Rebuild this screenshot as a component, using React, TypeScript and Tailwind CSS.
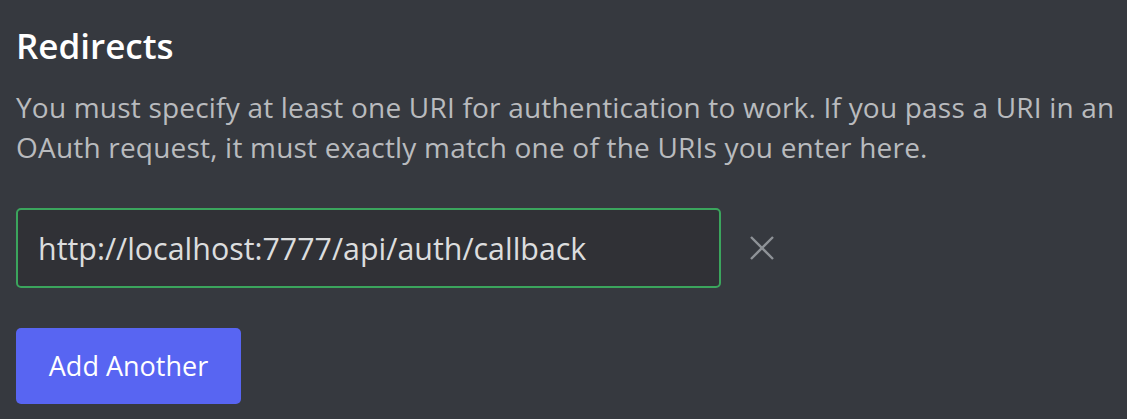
export default function App() {
  return (
    <div className="min-h-[419px] w-full bg-[#36393f] px-4 pt-[22px] font-['Open_Sans',sans-serif]">
      <h2 className="text-[35px] font-semibold leading-[48px] text-white">Redirects</h2>
      <p className="mr-[-12px] mt-[17px] text-[28px] leading-[40px] tracking-[0.2px] text-[#b9bbbe]">
        You must specify at least one URI for authentication to work. If you pass a URI in an OAuth request, it must
        exactly match one of the URIs you enter here.
      </p>

      <div className="mt-[41px] flex items-center">
        <input
          defaultValue="http://localhost:7777/api/auth/callback"
          className="h-[80px] w-[705px] rounded-[5px] border-2 border-[#3ba55d] bg-[#303136] px-[20px] text-[30.4px] text-[#dcddde] outline-none"
        />
        <button className="ml-[29px] text-[#8e9297]">
          <svg width="24" height="24" viewBox="0 0 24 24" fill="none" stroke="currentColor" strokeWidth="2.4">
            <path d="M1 1L23 23M23 1L1 23" />
          </svg>
        </button>
      </div>

      <button className="mt-[40px] h-[76px] w-[225px] rounded-[5px] bg-[#5865f2] text-[27px] text-white">
        Add Another
      </button>
    </div>
  );
}
